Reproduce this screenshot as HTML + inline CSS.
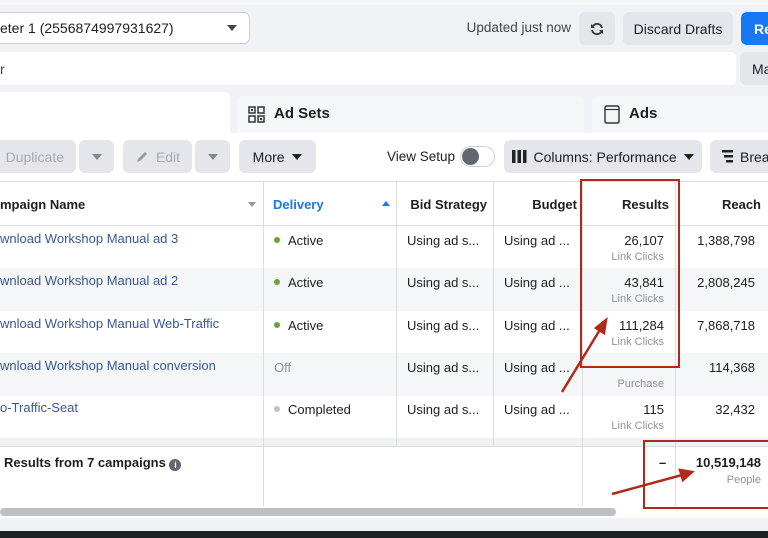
<!DOCTYPE html>
<html><head><style>
*{margin:0;padding:0;box-sizing:border-box}
body{width:768px;height:538px;overflow:hidden;background:#f0f2f5;font-family:"Liberation Sans",sans-serif;font-size:13px;color:#1c1e21;position:relative}
.a{position:absolute}
.btn{position:absolute;background:#e4e6eb;border-radius:6px;display:flex;align-items:center;justify-content:center;font-size:13px;color:#1c1e21}
.dis{color:#a8abaf}
.tri{display:inline-block;width:0;height:0;border-left:5px solid transparent;border-right:5px solid transparent;border-top:6px solid #444}
.v{position:absolute;top:181px;width:1px;height:325px;background:#dadde1}
.row{position:absolute;left:0;width:768px;height:43px}
.cell{position:absolute;font-size:13px}
.lnk{color:#385898}
.sub{color:#8d949e;font-size:11px}
.dot{display:inline-block;width:6px;height:6px;border-radius:50%;margin-right:8px;vertical-align:2px}
.r{text-align:right}
</style></head><body>
<div class="a" style="left:0;top:0;width:768px;height:5px;background:#f5f6f7"></div>
<div class="a" style="left:-4px;top:12px;width:254px;height:32px;background:#fff;border:1px solid #ccd0d5;border-radius:6px"></div>
<div class="a" style="left:0;top:20px;font-size:14px">eter 1 (2556874997931627)</div>
<div class="a tri" style="left:227px;top:25px"></div>
<div class="a r" style="left:400px;width:171px;top:20px;font-size:13.5px;color:#444">Updated just now</div>
<div class="btn" style="left:579px;top:12px;width:36px;height:33px"><svg width="16" height="16" viewBox="0 0 16 16"><path d="M3 9a5 5 0 0 0 9 2M13 7a5 5 0 0 0-9-2" fill="none" stroke="#333" stroke-width="1.8"/><path d="M2 3v4h4zM14 13V9h-4z" fill="#333"/></svg></div>
<div class="btn" style="left:623px;top:12px;width:110px;height:33px;font-size:14px">Discard Drafts</div>
<div class="btn" style="left:741px;top:12px;width:40px;height:33px;background:#1877f2;color:#fff;font-weight:bold;justify-content:flex-start;padding-left:13px;font-size:14px">Re</div>
<div class="a" style="left:-6px;top:52px;width:742px;height:33px;background:#fff;border-radius:6px"></div>
<div class="a" style="left:0;top:61px;font-size:14px;color:#444">r</div>
<div class="btn" style="left:740px;top:52px;width:40px;height:33px;justify-content:flex-start;padding-left:12px;font-size:14px">Ma</div>
<div class="a" style="left:0;top:92px;width:230px;height:50px;background:#fff;border-radius:0 6px 0 0"></div>
<div class="a" style="left:237px;top:96px;width:347px;height:38px;background:#f5f6f7;border-radius:6px 6px 0 0"></div>
<div class="a" style="left:592px;top:96px;width:180px;height:38px;background:#f5f6f7;border-radius:6px 6px 0 0"></div>
<svg class="a" style="left:248px;top:106px" width="17" height="17" viewBox="0 0 17 17"><g fill="none" stroke="#333" stroke-width="1.5"><rect x="1" y="1" width="6" height="6"/><rect x="10" y="1" width="6" height="6"/><rect x="1" y="10" width="6" height="6"/><rect x="10" y="10" width="6" height="6"/></g><rect x="3" y="3" width="2" height="2" fill="#333"/><rect x="12" y="12" width="2" height="2" fill="#333"/></svg>
<div class="a" style="left:274px;top:105px;font-size:15px;font-weight:bold">Ad Sets</div>
<svg class="a" style="left:604px;top:105px" width="16" height="19" viewBox="0 0 16 19"><rect x="1" y="1" width="14" height="17" rx="1.5" fill="none" stroke="#333" stroke-width="1.4"/><line x1="1" y1="4.5" x2="15" y2="4.5" stroke="#333" stroke-width="1.2"/></svg>
<div class="a" style="left:629px;top:105px;font-size:15px;font-weight:bold">Ads</div>
<div class="a" style="left:0;top:133px;width:768px;height:48px;background:#fff"></div>
<div class="btn dis" style="left:-6px;top:140px;width:82px;height:33px;justify-content:flex-end;padding-right:12px;font-size:14px">Duplicate</div>
<div class="btn" style="left:79px;top:140px;width:35px;height:33px"><span class="tri" style="border-top-color:#888"></span></div>
<div class="btn dis" style="left:123px;top:140px;width:69px;height:33px;font-size:14px"><svg width="14" height="14" viewBox="0 0 14 14" style="margin-right:7px"><path d="M2 12l1-3 7-7 2 2-7 7z" fill="#999"/></svg>Edit</div>
<div class="btn" style="left:195px;top:140px;width:35px;height:33px"><span class="tri" style="border-top-color:#888"></span></div>
<div class="btn" style="left:239px;top:140px;width:77px;height:33px;font-size:14px">More&nbsp;&nbsp;<span class="tri" style="border-top-color:#222"></span></div>
<div class="a r" style="left:350px;width:105px;top:149px;font-size:13.5px">View Setup</div>
<div class="a" style="left:460px;top:146px;width:35px;height:21px;border:1px solid #ccd0d5;border-radius:11px;background:#fff"></div>
<div class="a" style="left:462px;top:148px;width:17px;height:17px;border-radius:50%;background:#606770"></div>
<div class="btn" style="left:504px;top:140px;width:198px;height:33px;font-size:14px"><svg width="15" height="13" style="margin-right:7px"><rect x="0" y="0" width="3.5" height="13" fill="#222"/><rect x="5.5" y="0" width="3.5" height="13" fill="#222"/><rect x="11" y="0" width="3.5" height="13" fill="#222"/></svg>Columns: Performance&nbsp;&nbsp;<span class="tri" style="border-top-color:#222"></span></div>
<div class="btn" style="left:710px;top:140px;width:70px;height:33px;justify-content:flex-start;padding-left:12px;font-size:14px"><svg width="11" height="13" style="margin-right:7px"><rect x="0" y="0" width="11" height="2.5" fill="#222"/><rect x="2" y="5" width="9" height="2.5" fill="#222"/><rect x="4" y="10" width="7" height="2.5" fill="#222"/></svg>Brea</div>
<div class="a" style="left:0;top:181px;width:768px;height:325px;background:#fff"></div>
<div class="a" style="left:0;top:181px;width:768px;height:1px;background:#dadde1"></div>
<div class="a" style="left:0;top:225px;width:768px;height:1px;background:#dadde1"></div>
<div class="row" style="top:268px;background:#f5f6f7"></div>
<div class="row" style="top:353px;background:#f5f6f7"></div>
<div class="row" style="top:438px;height:8px;background:#f0f1f3"></div>
<div class="a" style="left:0;top:446px;width:768px;height:1px;background:#dadde1"></div>
<div class="v" style="left:263px"></div><div class="v" style="left:396px;height:265px"></div><div class="v" style="left:493px;height:265px"></div><div class="v" style="left:582px"></div><div class="v" style="left:675px"></div>
<div class="cell" style="left:0;top:197px;font-weight:bold">mpaign Name</div>
<div class="a" style="left:248px;top:202px;border-left:4px solid transparent;border-right:4px solid transparent;border-top:5px solid #999"></div>
<div class="cell" style="left:273px;top:197px;font-weight:bold;color:#1877f2">Delivery</div>
<div class="a" style="left:382px;top:201px;border-left:4px solid transparent;border-right:4px solid transparent;border-bottom:5px solid #1877f2"></div>
<div class="cell r" style="left:397px;width:90px;top:197px;font-weight:bold">Bid Strategy</div>
<div class="cell r" style="left:494px;width:83px;top:197px;font-weight:bold">Budget</div>
<div class="cell r" style="left:583px;width:86px;top:197px;font-weight:bold">Results</div>
<div class="cell r" style="left:676px;width:85px;top:197px;font-weight:bold">Reach</div>

<div class="cell lnk" style="left:0;top:231px">wnload Workshop Manual ad 3</div>
<div class="cell" style="left:274px;top:233px"><span class="dot" style="background:#6ba539"></span>Active</div>
<div class="cell" style="left:407px;top:233px">Using ad s...</div><div class="cell" style="left:504px;top:233px">Using ad ...</div>
<div class="cell r" style="left:583px;width:81px;top:233px">26,107</div><div class="cell r sub" style="left:583px;width:81px;top:251px">Link Clicks</div>
<div class="cell r" style="left:676px;width:79px;top:233px">1,388,798</div>

<div class="cell lnk" style="left:0;top:273px">wnload Workshop Manual ad 2</div>
<div class="cell" style="left:274px;top:275px"><span class="dot" style="background:#6ba539"></span>Active</div>
<div class="cell" style="left:407px;top:275px">Using ad s...</div><div class="cell" style="left:504px;top:275px">Using ad ...</div>
<div class="cell r" style="left:583px;width:81px;top:275px">43,841</div><div class="cell r sub" style="left:583px;width:81px;top:293px">Link Clicks</div>
<div class="cell r" style="left:676px;width:79px;top:275px">2,808,245</div>

<div class="cell lnk" style="left:0;top:316px">wnload Workshop Manual Web-Traffic</div>
<div class="cell" style="left:274px;top:318px"><span class="dot" style="background:#6ba539"></span>Active</div>
<div class="cell" style="left:407px;top:318px">Using ad s...</div><div class="cell" style="left:504px;top:318px">Using ad ...</div>
<div class="cell r" style="left:583px;width:81px;top:318px">111,284</div><div class="cell r sub" style="left:583px;width:81px;top:336px">Link Clicks</div>
<div class="cell r" style="left:676px;width:79px;top:318px">7,868,718</div>

<div class="cell lnk" style="left:0;top:358px">wnload Workshop Manual conversion</div>
<div class="cell" style="left:274px;top:360px;color:#8d949e">Off</div>
<div class="cell" style="left:407px;top:360px">Using ad s...</div><div class="cell" style="left:504px;top:360px">Using ad ...</div>
<div class="cell r sub" style="left:583px;width:81px;top:378px">Purchase</div>
<div class="cell r" style="left:676px;width:79px;top:360px">114,368</div>

<div class="cell lnk" style="left:0;top:400px">o-Traffic-Seat</div>
<div class="cell" style="left:274px;top:402px"><span class="dot" style="background:#bec3c9"></span>Completed</div>
<div class="cell" style="left:407px;top:402px">Using ad s...</div><div class="cell" style="left:504px;top:402px">Using ad ...</div>
<div class="cell r" style="left:583px;width:81px;top:402px">115</div><div class="cell r sub" style="left:583px;width:81px;top:420px">Link Clicks</div>
<div class="cell r" style="left:676px;width:79px;top:402px">32,432</div>

<div class="cell" style="left:4px;top:455px;font-weight:bold">Results from 7 campaigns <span style="display:inline-block;width:12px;height:12px;border-radius:50%;background:#606770;color:#fff;font-size:9px;text-align:center;line-height:12px;vertical-align:-1px">i</span></div>
<div class="cell" style="left:659px;top:455px;font-weight:bold">–</div>
<div class="cell r" style="left:676px;width:85px;top:455px;font-weight:bold">10,519,148</div>
<div class="cell r sub" style="left:676px;width:85px;top:474px">People</div>

<div class="a" style="left:0;top:506px;width:768px;height:12px;background:#fff"></div>
<div class="a" style="left:0;top:508px;width:616px;height:8px;background:#bcc0c4;border-radius:4px"></div>
<div class="a" style="left:0;top:518px;width:768px;height:13px;background:#f0f2f5"></div>
<div class="a" style="left:0;top:531px;width:768px;height:7px;background:#1c2126"></div>

<div class="a" style="left:580px;top:179px;width:100px;height:189px;border:2px solid #b02a1a"></div>
<div class="a" style="left:643px;top:440px;width:130px;height:69px;border:2px solid #b02a1a"></div>
<svg class="a" style="left:0;top:0" width="768" height="538"><g stroke="#b02a1a" stroke-width="2.5" fill="#b02a1a"><line x1="562" y1="392" x2="601" y2="328"/><polygon points="606,320 596,328 604,333" /><line x1="612" y1="494" x2="682" y2="475"/><polygon points="692,472 680,470 683,480"/></g></svg>
</body></html>
